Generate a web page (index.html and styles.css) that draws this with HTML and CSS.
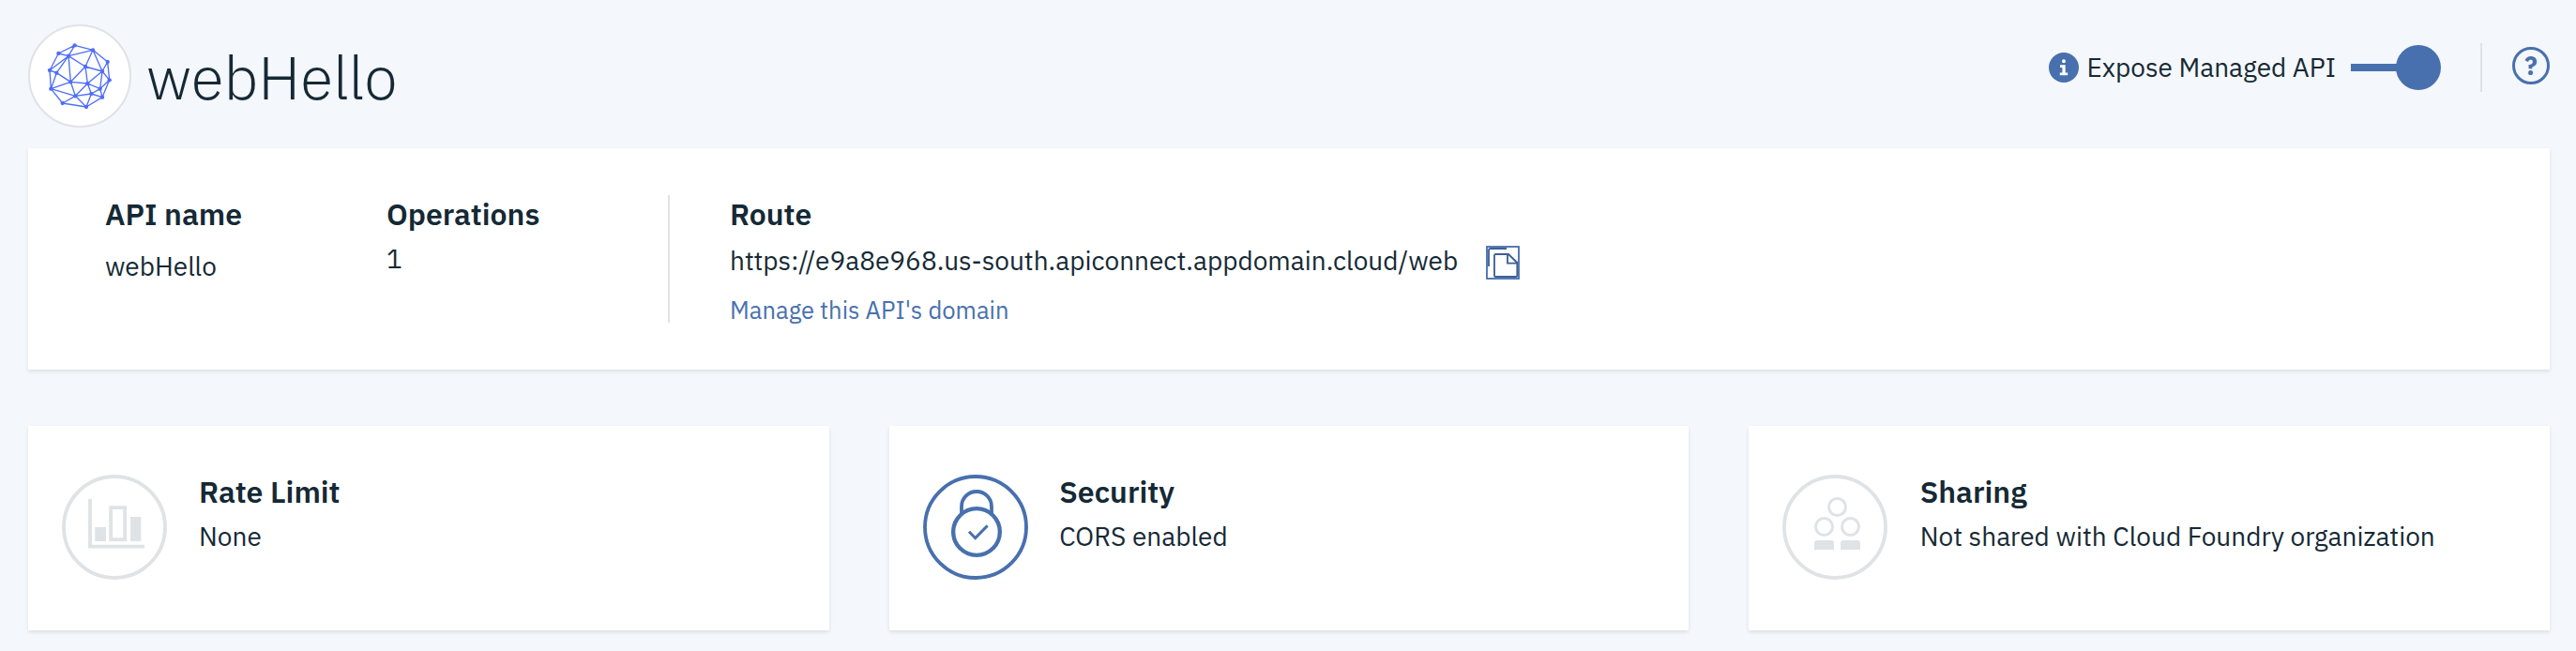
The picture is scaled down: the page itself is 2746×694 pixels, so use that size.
FILE: index.html
```
<!DOCTYPE html>
<html lang="en">
<head>
<meta charset="utf-8">
<title>webHello</title>
<link rel="stylesheet" href="styles.css">
</head>
<body>
<header class="header">
  <svg class="avatar" viewBox="90 78 330 330">
    <circle class="avatar-ring" cx="255" cy="243" r="162"/>
    <path class="avatar-mesh" d="M239 145L297 160L344 198L350 256L327 311L276 342L200 330L163 284L159 225L187 171ZM239 145L219 179L297 160L273 213L327 228L297 160M187 171L219 179L159 225L181 233L219 179L273 213L226 262L219 179M344 198L327 228L350 256L320 284L327 228L280 267L273 213M181 233L163 284L226 262L181 233M226 262L280 267L320 284L327 311L292 300L320 284M280 267L292 300L241 307L280 267M226 262L241 307L163 284M200 330L241 307L276 342L292 300"/>
    <g class="avatar-nodes"><circle cx="239" cy="145" r="6.5"/><circle cx="297" cy="160" r="6.5"/><circle cx="187" cy="171" r="6.5"/><circle cx="219" cy="179" r="6.5"/><circle cx="344" cy="198" r="6.5"/><circle cx="273" cy="213" r="6.5"/><circle cx="159" cy="225" r="6.5"/><circle cx="181" cy="233" r="6.5"/><circle cx="327" cy="228" r="6.5"/><circle cx="350" cy="256" r="6.5"/><circle cx="226" cy="262" r="6.5"/><circle cx="280" cy="267" r="6.5"/><circle cx="163" cy="284" r="6.5"/><circle cx="320" cy="284" r="6.5"/><circle cx="292" cy="300" r="6.5"/><circle cx="241" cy="307" r="6.5"/><circle cx="327" cy="311" r="6.5"/><circle cx="200" cy="330" r="6.5"/><circle cx="276" cy="342" r="6.5"/></g>
  </svg>
  <h1 class="title">webHello</h1>
  <div class="actions">
    <svg class="info" viewBox="0 0 32 32"><circle cx="16" cy="16" r="16"/><path d="M16 7.300a2 2 0 1 1 0 4a2 2 0 0 1 0-4zM12 13.300H17.700V21.500H20.200V24.200H11.800V21.500H14.400V16H12Z"/></svg>
    <span class="expose">Expose Managed API</span>
    <span class="toggle"><span class="toggle-track"></span><span class="toggle-knob"></span></span>
    <span class="divider"></span>
    <span class="help">?</span>
  </div>
</header>
<section class="card summary">
  <div class="field field-name"><h2 class="label">API name</h2><p class="value">webHello</p></div>
  <div class="field field-ops"><h2 class="label">Operations</h2><p class="value">1</p></div>
  <div class="field field-route">
    <h2 class="label">Route</h2>
    <p class="value url-row"><span>https://e9a8e968.us-south.apiconnect.appdomain.cloud/web</span>
      <svg class="copy" viewBox="1212 216 108 108"><rect class="copy-frame" x="1215" y="219" width="102" height="102"/><path d="M1221 282V231Q1221 225 1227 225H1278M1284 243H1243Q1239 243 1239 247V311Q1239 315 1243 315H1308Q1312 315 1312 311V270ZM1281 243V272H1312"/></svg></p>
    <a class="link">Manage this API's domain</a>
  </div>
</section>
<section class="tiles">
  <article class="card tile">
    <svg class="tile-icon" viewBox="198 228 336 336"><circle class="line" cx="366" cy="396" r="162"/><path class="line" d="M288 306V458H462"/><rect class="line" x="354.500" y="333.500" width="45" height="102"/><path class="solid" d="M304 396H339V441H304ZM417 363H451V441H417Z"/></svg>
    <div class="tile-text"><h2 class="label">Rate Limit</h2><p class="value">None</p></div>
  </article>
  <article class="card tile tile-security">
    <svg class="tile-icon active" viewBox="372 228 336 336"><circle class="line" cx="540" cy="396" r="162"/><circle class="line lock" cx="543" cy="411" r="74.500"/><path class="line" d="M495 354V330A48 48 0 0 1 591 330V354"/><path class="line check" d="M519 410L539 431L578 391"/></svg>
    <div class="tile-text"><h2 class="label">Security</h2><p class="value">CORS enabled</p></div>
  </article>
  <article class="card tile tile-sharing">
    <svg class="tile-icon" viewBox="360 228 336 336"><circle class="line" cx="528" cy="396" r="162"/><g class="line people"><circle cx="535.500" cy="331.500" r="27"/><circle cx="493.500" cy="394.500" r="27"/><circle cx="577.500" cy="394.500" r="27"/></g><path class="solid" d="M462 468V447Q462 438 471 438H516Q525 438 525 447V468ZM546 468V447Q546 438 555 438H600Q609 438 609 447V468Z"/></svg>
    <div class="tile-text"><h2 class="label">Sharing</h2><p class="value">Not shared with Cloud Foundry organization</p></div>
  </article>
</section>
</body>
</html>
```
FILE: styles.css
```
* { box-sizing: border-box; margin: 0; padding: 0; }
body {
  height: 694px;
  padding: 0 28px 0 30px;
  background: #f4f7fb;
  color: #152935;
  font-family: "IBM Plex Sans", Roboto, "Noto Sans", sans-serif;
  overflow: hidden;
}
svg { display: block; flex: none; }
.header { display: flex; align-items: flex-start; height: 158px; }
.avatar { width: 110px; height: 110px; margin-top: 26px; }
.avatar-ring { fill: #fff; stroke: #dfe3e6; stroke-width: 6; }
.avatar-mesh { fill: none; stroke: #4f6ef7; stroke-width: 4; stroke-linejoin: round; }
.avatar-nodes { fill: #4f6ef7; }
.title { margin: 40px 0 0 16px; font-size: 64px; font-weight: 300; line-height: 84px; }
.actions { display: flex; align-items: center; height: 144px; margin-left: auto; }
.info { width: 32px; height: 32px; margin-right: 8.5px; }
.info circle { fill: #4870ae; }
.info path { fill: #fff; }
.expose { margin-bottom: 1px; font-size: 28px; line-height: 37px; }
.toggle { display: flex; align-items: center; width: 96px; margin-left: 16px; }
.toggle-track { width: 52px; height: 8px; margin-right: -4px; background: #4870ae; }
.toggle-knob { width: 48px; height: 48px; border-radius: 50%; background: #4870ae; }
.divider { width: 2px; height: 52px; margin: 0 32px 0 42px; background: #dfe3e6; }
.help { width: 40px; height: 40px; margin-bottom: 4px; border: 3px solid #4870ae; border-radius: 50%; color: #4870ae; font-size: 27px; font-weight: 700; line-height: 33px; text-align: center; }
.card { background: #fff; box-shadow: 0 2px 4px rgba(0, 0, 0, 0.1); }
.label { font-size: 32px; font-weight: 600; line-height: 42px; white-space: nowrap; }
.value { font-size: 28px; line-height: 37px; white-space: nowrap; }
.summary { display: flex; height: 236px; padding: 50px 0 50px 82px; }
.summary .label { margin-top: -1px; }
.field-name { width: 300px; }
.field-name .value { margin-top: 16px; }
.field-ops { width: 302px; border-right: 2px solid #dfe3e6; }
.field-ops .value { margin-top: 8px; }
.field-route { padding-left: 64px; }
.field-route .value { margin-top: 10px; }
.url-row { display: flex; height: 37px; }
.copy { width: 36px; height: 36px; margin: 3px 0 0 30px; fill: none; stroke: #3c5f96; stroke-width: 5.500; }
.copy-frame { stroke: #4870ae; }
.link { display: block; margin-top: 18px; color: #4870ae; font-size: 25.6px; line-height: 33px; white-space: nowrap; }
.tiles { display: grid; grid-template-columns: 854fr 852fr 854fr; gap: 64px; margin-top: 60px; }
.tile { display: flex; height: 218px; padding: 49px 36px; }
.tile-icon { width: 112px; height: 112px; margin: 3px 34px 0 0; color: #dfe3e6; }
.tile-security .tile-icon { margin-right: 33.3px; }
.tile-sharing .tile-icon { margin-right: 34.7px; }
.tile-icon.active { color: #4870ae; }
.line { fill: none; stroke: currentColor; stroke-width: 11.500; }
.lock { stroke-width: 13; }
.check, .people { stroke-width: 9; }
.solid { fill: currentColor; }
.tile-text .value { margin-top: 8px; }
```
